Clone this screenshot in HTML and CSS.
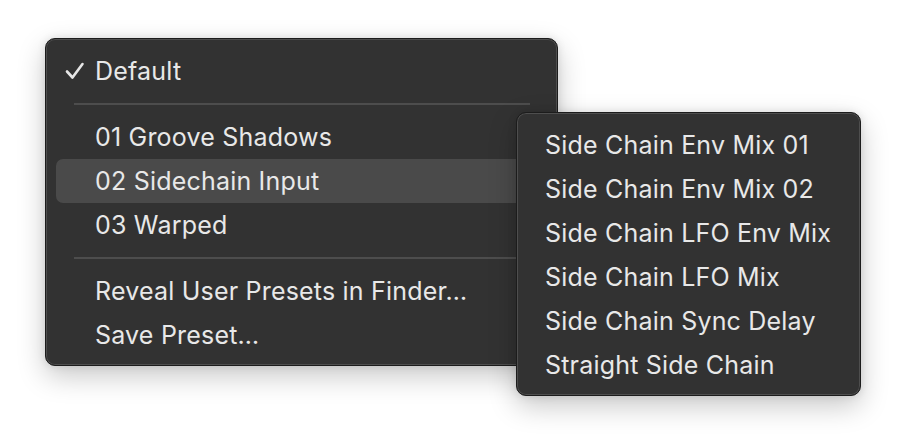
FILE: index.html
```html
<!DOCTYPE html>
<html>
<head>
<meta charset="utf-8">
<link rel="stylesheet" href="styles.css">
</head>
<body>
<div class="stage">
  <div class="menu main">
    <div class="item checked">
      <svg class="check" width="20" height="18" viewBox="0 0 20 18"><polyline points="2,9.5 7.5,15.5 17.5,2" fill="none" stroke="#e6e6e6" stroke-width="2.6" stroke-linecap="round" stroke-linejoin="round"/></svg>
      <span>Default</span>
    </div>
    <div class="sep"></div>
    <div class="item"><span>01 Groove Shadows</span></div>
    <div class="item active"><span>02 Sidechain Input</span></div>
    <div class="item"><span>03 Warped</span></div>
    <div class="sep"></div>
    <div class="item"><span>Reveal User Presets in Finder…</span></div>
    <div class="item"><span>Save Preset…</span></div>
  </div>
  <div class="menu sub">
    <div class="item"><span>Side Chain Env Mix 01</span></div>
    <div class="item"><span>Side Chain Env Mix 02</span></div>
    <div class="item"><span>Side Chain LFO Env Mix</span></div>
    <div class="item"><span>Side Chain LFO Mix</span></div>
    <div class="item"><span>Side Chain Sync Delay</span></div>
    <div class="item"><span>Straight Side Chain</span></div>
  </div>
</div>
</body>
</html>
```

FILE: styles.css
```css
html, body {
  margin: 0;
  padding: 0;
  background: #ffffff;
}
body {
  width: 900px;
  height: 443px;
  overflow: hidden;
  font-family: Inter, "Noto Sans", "Liberation Sans", sans-serif;
}
.stage {
  position: relative;
  width: 900px;
  height: 443px;
  padding: 38px 0 0 45px;
  box-sizing: border-box;
}
.menu {
  box-sizing: border-box;
  background: #323232;
  border: 1px solid #1c1c1c;
  border-radius: 10px;
  box-shadow: inset 0 0 0 1px #4e4e4e, 0 10px 28px rgba(0,0,0,0.22), 0 0 8px rgba(0,0,0,0.10);
  display: flex;
  flex-direction: column;
  padding: 10px 10px 8px 10px;
}
.main {
  width: 513px;
  height: 328px;
}
.sub {
  position: absolute;
  left: 516px;
  top: 112px;
  width: 345px;
  height: 284px;
}
.item {
  height: 44px;
  display: flex;
  align-items: center;
  border-radius: 7px;
  color: #e8e8e8;
  font-size: 25px;
  letter-spacing: 0.2px;
  position: relative;
}
.main .item {
  padding-left: 39px;
}
.sub .item {
  padding-left: 18px;
}
.item.active {
  background: #4a4a4a;
}
.check {
  position: absolute;
  left: 9px;
  top: 13px;
}
.sep {
  height: 22px;
  display: flex;
  align-items: center;
  margin: 0 17px 0 18px;
}
.sep::before {
  content: "";
  display: block;
  width: 100%;
  height: 2px;
  background: #4d4d4d;
}
```
